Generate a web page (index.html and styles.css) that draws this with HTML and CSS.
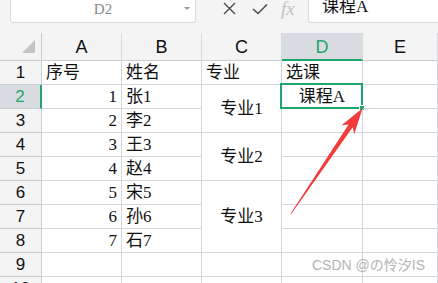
FILE: index.html
```html
<!DOCTYPE html>
<html>
<head>
<meta charset="utf-8">
<link rel="stylesheet" href="styles.css">
</head>
<body>
<div class="sheet">
  <div class="toolbar">
    <div class="namebox"><span class="ref">D2</span><span class="caret"></span></div>
    <div class="fbtns">
      <svg class="ico" width="13" height="13" viewBox="0 0 13 13"><path d="M1 1L12 12M12 1L1 12" stroke="#4a4a4a" stroke-width="1.4" fill="none"/></svg>
      <svg class="ico" width="16" height="12" viewBox="0 0 16 12"><path d="M1 6L6 10.5L15 1.5" stroke="#4a4a4a" stroke-width="1.5" fill="none"/></svg>
      <span class="fx">fx</span>
    </div>
    <div class="finput">课程A</div>
  </div>
  <div class="grid">
    <div class="corner"><svg width="14" height="14" viewBox="0 0 14 14"><path d="M0 13L13 13L13 0Z" fill="#c4c4c4"/></svg></div>
    <div class="ch">A</div><div class="ch">B</div><div class="ch">C</div><div class="ch sel">D</div><div class="ch">E</div>

    <div class="rh">1</div><div class="c">序号</div><div class="c">姓名</div><div class="c">专业</div><div class="c">选课</div><div class="c"></div>
    <div class="rh sel">2</div><div class="c r">1</div><div class="c">张1</div><div class="c m span2">专业1</div><div class="c m active">课程A<span class="selbox"><span class="handle"></span></span></div><div class="c"></div>
    <div class="rh">3</div><div class="c r">2</div><div class="c">李2</div><div class="c"></div><div class="c"></div>
    <div class="rh">4</div><div class="c r">3</div><div class="c">王3</div><div class="c m span2">专业2</div><div class="c"></div><div class="c"></div>
    <div class="rh">5</div><div class="c r">4</div><div class="c">赵4</div><div class="c"></div><div class="c"></div>
    <div class="rh">6</div><div class="c r">5</div><div class="c">宋5</div><div class="c m span3">专业3</div><div class="c"></div><div class="c"></div>
    <div class="rh">7</div><div class="c r">6</div><div class="c">孙6</div><div class="c"></div><div class="c"></div>
    <div class="rh">8</div><div class="c r">7</div><div class="c">石7</div><div class="c"></div><div class="c"></div>
    <div class="rh">9</div><div class="c"></div><div class="c"></div><div class="c"></div><div class="c"></div><div class="c"></div>
    <div class="rh">10</div><div class="c"></div><div class="c"></div><div class="c"></div><div class="c"></div><div class="c"></div>
  </div>
  <svg class="arrow" width="438" height="283" viewBox="0 0 438 283">
    <polygon points="290.5,213.8 348.6,124.4 341.6,125.2 362.6,108.3 354.2,134.2 352.7,127.2 291.2,214" fill="#f33b3b"/>
  </svg>
  <div class="wm">CSDN @の怜汐IS</div>
</div>
</body>
</html>
```

FILE: styles.css
```css
* { box-sizing: border-box; }
html, body { margin: 0; padding: 0; background: #fff; }
.sheet {
  position: relative;
  width: 438px;
  height: 283px;
  overflow: hidden;
  font-family: "Liberation Serif", "Noto Sans CJK SC", serif;
}
.toolbar {
  height: 33px;
  background: #f4f4f5;
  display: flex;
  align-items: flex-start;
}
.namebox {
  margin-left: 10px;
  width: 186px;
  height: 23px;
  background: #fff;
  border: 1px solid #dcdcdc;
  border-top: none;
  border-radius: 0 0 3px 3px;
  display: flex;
  align-items: center;
  justify-content: center;
  position: relative;
}
.ref {
  font-family: "Liberation Serif", serif;
  font-size: 15px;
  color: #8a8a8a;
  margin-top: -4px;
}
.caret {
  position: absolute;
  right: 5px;
  top: 7px;
  width: 0;
  height: 0;
  border-left: 3px solid transparent;
  border-right: 3px solid transparent;
  border-top: 3px solid #9a9a9a;
}
.fbtns {
  display: flex;
  align-items: center;
  height: 17px;
  margin-left: 27px;
  gap: 16px;
}
.fbtns .ico:nth-child(2) { margin-left: 0; }
.fx {
  font-family: "Liberation Serif", serif;
  font-style: italic;
  font-size: 19px;
  color: #c2c2c2;
  line-height: 17px;
  margin-left: -3px;
}
.finput {
  margin-left: auto;
  width: 130px;
  height: 23px;
  background: #fff;
  border-left: 1px solid #dcdcdc;
  border-bottom: 1px solid #dcdcdc;
  border-radius: 0 0 0 3px;
  padding-left: 13px;
  font-size: 17px;
  line-height: 14px;
  color: #111;
  overflow: hidden;
}
.grid {
  display: grid;
  grid-template-columns: 42px 80px 80px 80px 81px 1fr;
  grid-template-rows: 28px repeat(10, 24px);
}
.corner {
  background: #f4f4f5;
  border-right: 1px solid #c8ccd4;
  border-bottom: 1px solid #c8ccd4;
  padding: 7px 0 0 22px;
}
.corner svg { display: block; }
.ch {
  background: #f4f4f5;
  border-right: 1px solid #d6d9df;
  border-bottom: 1px solid #c8ccd4;
  font-family: "Liberation Sans", sans-serif;
  font-size: 18px;
  color: #111;
  text-align: center;
  line-height: 27px;
  padding-top: 1px;
}
.ch.sel {
  background: #d8dbe0;
  color: #1fa66c;
  border-bottom: 2px solid #1fa66c;
}
.rh {
  background: #f4f4f5;
  border-right: 1px solid #c8ccd4;
  border-bottom: 1px solid #c8ccd4;
  font-family: "Liberation Sans", sans-serif;
  font-size: 17px;
  color: #111;
  text-align: center;
  line-height: 23px;
}
.rh.sel {
  background: #d8dbe0;
  color: #1fa66c;
  border-right: 2px solid #1fa66c;
}
.c {
  border-right: 1px solid #d3d6dd;
  border-bottom: 1px solid #d3d6dd;
  font-size: 17px;
  line-height: 23px;
  color: #111;
  padding: 0 4px;
  white-space: nowrap;
  position: relative;
}
.c.r { text-align: right; }
.c.m {
  display: flex;
  align-items: center;
  justify-content: center;
}
.span2 { grid-row: span 2; }
.span3 { grid-row: span 3; }
.selbox {
  position: absolute;
  left: -2px;
  top: -2px;
  right: -1px;
  bottom: -1px;
  border: 2px solid #1fa66c;
}
.handle {
  position: absolute;
  right: -4px;
  bottom: -4px;
  width: 6px;
  height: 6px;
  background: #1fa66c;
  border: 1px solid #fff;
}
.arrow {
  position: absolute;
  left: 0;
  top: 0;
}
.wm {
  position: absolute;
  right: 13px;
  top: 256px;
  font-family: "Liberation Sans", "Noto Sans CJK SC", sans-serif;
  font-size: 14px;
  line-height: 18px;
  color: #b4b4b4;
}
```
